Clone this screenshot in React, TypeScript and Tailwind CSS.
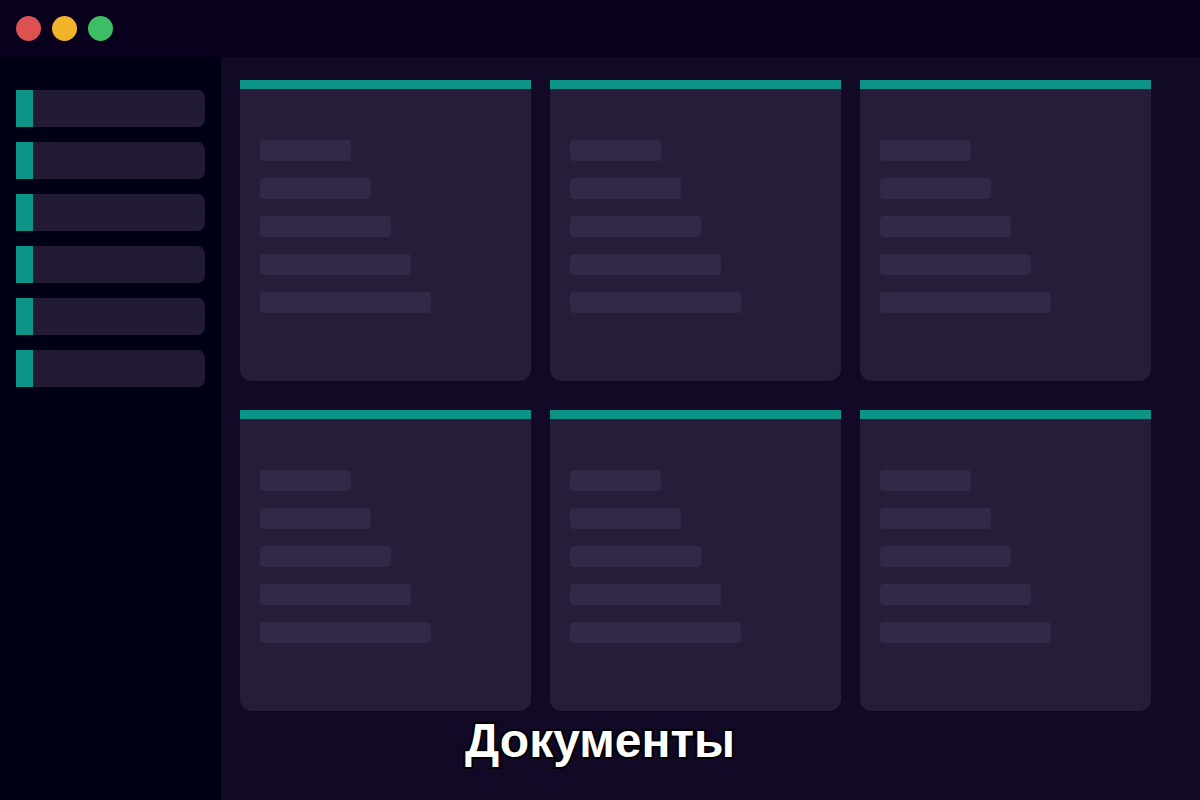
const NAV_ITEMS = [1, 2, 3, 4, 5, 6]

const CARDS = [1, 2, 3, 4, 5, 6]

const LINE_WIDTHS = ['w-[91px]', 'w-[111px]', 'w-[131px]', 'w-[151px]', 'w-[171px]']

function TitleBar() {
  return (
    <header className="flex h-[57px] items-center gap-[11px] bg-[#09001d] px-4">
      <button type="button" aria-label="Закрыть" className="size-[25px] rounded-full bg-[#dd5151]" />
      <button type="button" aria-label="Свернуть" className="size-[25px] rounded-full bg-[#f0b429]" />
      <button type="button" aria-label="Развернуть" className="size-[25px] rounded-full bg-[#3dbe65]" />
    </header>
  )
}

function Sidebar() {
  return (
    <nav className="w-[221px] shrink-0 bg-[#000014] px-4 pt-[33px]">
      <ul className="flex flex-col gap-[15px]">
        {NAV_ITEMS.map((item) => (
          <li
            key={item}
            className="h-[37px] rounded-r-lg border-l-[17px] border-[#0d9488] bg-[#231a36]"
          />
        ))}
      </ul>
    </nav>
  )
}

function DocumentCard() {
  return (
    <article className="rounded-b-xl border-t-[9px] border-[#0d9488] bg-[#261d3a] px-5 pt-[51px] pb-[68px]">
      <div className="flex flex-col gap-[17px]">
        {LINE_WIDTHS.map((width) => (
          <div key={width} className={`h-[21px] max-w-full rounded bg-[#322847] ${width}`} />
        ))}
      </div>
    </article>
  )
}

export default function App() {
  return (
    <div className="relative flex min-h-screen flex-col bg-[#120926] font-['Liberation_Sans',Arial,sans-serif]">
      <TitleBar />
      <div className="flex flex-1">
        <Sidebar />
        <main className="flex-1 pt-[23px] pr-[49px] pl-[19px]">
          <div className="grid grid-cols-3 gap-x-[19px] gap-y-[29px]">
            {CARDS.map((card) => (
              <DocumentCard key={card} />
            ))}
          </div>
        </main>
      </div>

      {/* caption lies over both the sidebar and the cards */}
      <h1 className="absolute inset-x-0 bottom-8 text-center text-[48px] leading-[54px] font-bold text-white [-webkit-text-stroke:4px_black] [paint-order:stroke_fill]">
        Документы
      </h1>
    </div>
  )
}
